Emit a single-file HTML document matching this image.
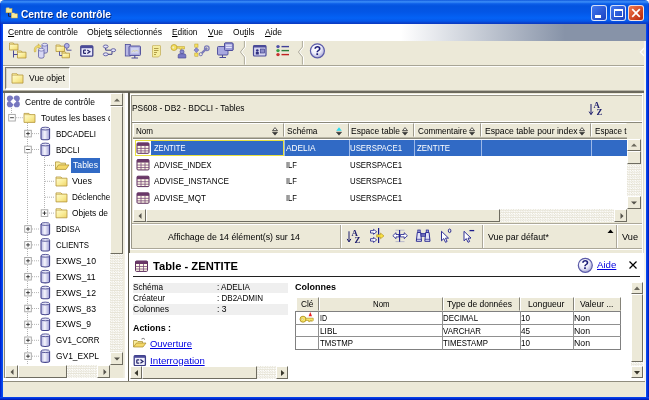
<!DOCTYPE html><html><head><meta charset="utf-8"><title>Centre de contrôle</title><style>html,body{margin:0;padding:0;}
body{width:649px;height:400px;position:relative;overflow:hidden;background:#fff;font-family:"Liberation Sans","DejaVu Sans",sans-serif;font-size:9px;color:#000;}
div,span,a{position:absolute;box-sizing:border-box;white-space:nowrap;}
.t{line-height:12px;height:12px;}
a.t{color:#0000e0;text-decoration:underline;}
.win{will-change:transform;left:0;top:0;width:649px;height:400px;background:#ece9d8;border-radius:4.5px 4.5px 0 0;overflow:hidden;}
.title{left:0;top:0;width:649px;height:24px;background:linear-gradient(#0f57dc 0,#3c8ef8 1.8px,#0c5ee8 3.8px,#0353df 6px,#0356e6 12px,#0462f5 18px,#0558ea 21px,#0a3cc4 23.3px,#0a3cc4 24px);}
.bl{left:0;top:24px;width:3px;height:376px;background:linear-gradient(90deg,#0018c8 0,#0030dc 1px,#0446ee 2px,#0a50f0 3px);}
.br{left:645.8px;top:24px;width:3.2px;height:376px;background:linear-gradient(90deg,#0a50f0 0,#0440e8 1px,#0028d0 2.2px,#0014b0 3.2px);}
.bb{left:0;top:396.8px;width:649px;height:3.2px;background:linear-gradient(#0a4af0 0,#0030d8 1.5px,#0014a8 3.2px);}
.menu{left:3px;top:24px;width:643px;height:17px;background:linear-gradient(90deg,#fff 0,#fff 398px,#8793a8 562px,#8793a8 100%);}
.sb{background:#ece9d8;border:1px solid;border-color:#fff #6e6c60 #6e6c60 #fff;}
.track{background:repeating-conic-gradient(#fdfdfb 0 25%,#e6e3d6 0 50%) 0 0/2.46px 2.46px;}
.hd{background:#ece9d8;border:1px solid;border-color:#fff #9d9a8b #ece9d8 #fff;}
</style></head><body>
<div class="win">
<svg width="0" height="0" style="position:absolute"><defs><linearGradient id="fg" x1="0" y1="0" x2="1" y2="1"><stop offset="0" stop-color="#fffbd0"/><stop offset="0.5" stop-color="#faee9c"/><stop offset="1" stop-color="#f0d468"/></linearGradient><linearGradient id="cg" x1="0" x2="1" y1="0" y2="0"><stop offset="0" stop-color="#b4b4e0"/><stop offset="0.45" stop-color="#f6f6fd"/><stop offset="1" stop-color="#9c9cd4"/></linearGradient><radialGradient id="hg" cx="0.4" cy="0.35" r="0.7"><stop offset="0" stop-color="#ffffff"/><stop offset="0.5" stop-color="#eeeefa"/><stop offset="1" stop-color="#a4a4d4"/></radialGradient></defs></svg>
<div class="title"></div>
<svg style="position:absolute;left:4px;top:5px" width="17" height="15" viewBox="4 5 17 15"><rect x="6" y="8.6" width="6" height="4.2" fill="#f8ea98" stroke="#c8a838" stroke-width="0.5"/><rect x="6.3" y="7.6" width="3" height="1.3" fill="#f8ea98"/><rect x="11.3" y="13.8" width="6.2" height="4.2" fill="#f8ea98" stroke="#c8a838" stroke-width="0.5"/><rect x="11.6" y="12.8" width="3" height="1.3" fill="#f8ea98"/><path d="M8.5 13V16.3H11" stroke="#202040" fill="none" stroke-width="1"/></svg>
<div class="t" style="left:21px;top:7.699999999999999px;transform:scaleX(0.926);transform-origin:0 0;font-size:11px;font-weight:bold;color:#fff;text-shadow:1px 1px 0 #0a2a80;">Centre de contrôle</div>
<div style="left:591.4px;top:5px;width:16px;height:16.2px;border:1px solid rgba(255,255,255,0.82);border-radius:3px;background:linear-gradient(135deg,#4178f0,#1a40c0);"><div style="left:3px;top:9.3px;width:6px;height:2.3px;background:#fff"></div></div>
<div style="left:609.5px;top:5px;width:16px;height:16.2px;border:1px solid rgba(255,255,255,0.82);border-radius:3px;background:linear-gradient(135deg,#4178f0,#1a40c0);"><div style="left:3px;top:2.5px;width:9.2px;height:8.8px;border:1px solid #fff;border-top-width:2.2px"></div></div>
<div style="left:627.8px;top:5px;width:16px;height:16.2px;border:1px solid rgba(255,255,255,0.82);border-radius:3px;background:linear-gradient(135deg,#f0784c,#b82408);"><svg style="position:absolute;left:1px;top:1px" width="12" height="12"><path d="M2.2 2.2L9.8 9.8M9.8 2.2L2.2 9.8" stroke="#fff" stroke-width="1.7"/></svg></div>
<div class="menu"></div>
<div class="t" style="left:8px;top:26px;transform:scaleX(0.945);transform-origin:0 0;"><u>C</u>entre de contrôle</div>
<div class="t" style="left:87px;top:26px;transform:scaleX(0.955);transform-origin:0 0;">Objet<u>s</u> sélectionnés</div>
<div class="t" style="left:172.2px;top:26px;transform:scaleX(0.926);transform-origin:0 0;"><u>E</u>dition</div>
<div class="t" style="left:207.6px;top:26px;transform:scaleX(0.956);transform-origin:0 0;"><u>V</u>ue</div>
<div class="t" style="left:232.6px;top:26px;transform:scaleX(0.934);transform-origin:0 0;">Ou<u>t</u>ils</div>
<div class="t" style="left:264.6px;top:26px;transform:scaleX(0.944);transform-origin:0 0;"><u>A</u>ide</div>
<div style="left:3px;top:64.6px;width:641.5px;height:1px;background:#a8a596"></div>
<div style="left:3px;top:65.6px;width:641.5px;height:1.1px;background:#fdfdfa"></div>
<svg style="position:absolute;left:4px;top:41px" width="641" height="25" viewBox="4 41 641 25"><path d="M9.5 44.2H18.0 V50H9.5Z" fill="url(#fg)" stroke="#b4963a" stroke-width="0.8"/><path d="M9.5 44.2V43H13.325L14.175 44.2" fill="url(#fg)" stroke="#b4963a" stroke-width="0.8"/><path d="M17.5 52.2H26.0 V58H17.5Z" fill="url(#fg)" stroke="#b4963a" stroke-width="0.8"/><path d="M17.5 52.2V51H21.325L22.175 52.2" fill="url(#fg)" stroke="#b4963a" stroke-width="0.8"/><path d="M13.5 50.5V57.5M13.5 54.5H17.5" stroke="#4a4a98" fill="none"/><path d="M42 44.7V51.8A2.75 1.4 0 0 0 47.5 51.8V44.7" fill="#c8c8ec" stroke="#4a4a98" stroke-width="0.7"/><ellipse cx="44.75" cy="44.7" rx="2.75" ry="1.4" fill="#e4e4f6" stroke="#4a4a98" stroke-width="0.56"/><path d="M38.5 49.7V56.8A2.75 1.4 0 0 0 44.0 56.8V49.7" fill="#d8d8f4" stroke="#4a4a98" stroke-width="0.7"/><ellipse cx="41.25" cy="49.7" rx="2.75" ry="1.4" fill="#e4e4f6" stroke="#4a4a98" stroke-width="0.56"/><path d="M34.5 52C33.5 48 35.5 45.5 38.5 45.5L38 43.8L41 46.3L38.3 48.3L38.4 47C36.5 47 35.5 49 36 51.5Z" fill="#f4e070" stroke="#b89a30" stroke-width="0.5"/><path d="M56 46.2H64.5 V51.5H56Z" fill="url(#fg)" stroke="#b4963a" stroke-width="0.8"/><path d="M56 46.2V45H59.825L60.675 46.2" fill="url(#fg)" stroke="#b4963a" stroke-width="0.8"/><path d="M62 53.2H69.5 V57.8H62Z" fill="url(#fg)" stroke="#b4963a" stroke-width="0.8"/><path d="M62 53.2V52H65.375L66.125 53.2" fill="url(#fg)" stroke="#b4963a" stroke-width="0.8"/><circle cx="66.8" cy="45.8" r="2.4" fill="#b0b0e8" stroke="#4a4a98" stroke-width="0.7"/><path d="M66.8 48.2V50.2H71.5M59.5 51.5V55.5H62" stroke="#4a4a98" fill="none" stroke-width="0.9"/><rect x="80.8" y="45.8" width="12" height="10.4" rx="1" fill="#e8e8fa" stroke="#3c3c88" stroke-width="1.3"/><rect x="80.8" y="45.8" width="12" height="2.4" fill="#4a4a98"/><path d="M86 50.2H84.2Q83.6 50.2 83.6 50.8V52.8Q83.6 53.4 84.2 53.4H86M87.3 50L89.9 51.8L87.3 53.6" stroke="#28286c" fill="none" stroke-width="1.25"/><ellipse cx="105.7" cy="46.5" rx="2.4" ry="1.5" fill="#e4e4f8" stroke="#4a4a98" stroke-width="0.8"/><ellipse cx="113.3" cy="50.2" rx="2.4" ry="1.5" fill="#e4e4f8" stroke="#4a4a98" stroke-width="0.8"/><ellipse cx="105.7" cy="54.3" rx="2.4" ry="1.5" fill="#e4e4f8" stroke="#4a4a98" stroke-width="0.8"/><path d="M105.7 48V50.2H110.8M108 54.3H112V51.8" stroke="#303080" fill="none" stroke-width="0.9"/><rect x="125.3" y="44.5" width="5" height="11.5" fill="#b8b8e4" stroke="#4a4a98" stroke-width="0.8"/><rect x="129" y="46" width="11.5" height="9.5" rx="1" fill="#a8a8dc" stroke="#4a4a98" stroke-width="0.9"/><rect x="130.8" y="47.6" width="8" height="6" fill="#d0d4f0"/><path d="M131.5 52L133.5 50.5L135 51.5L136.5 50L138 51.5" stroke="#d8d080" fill="none" stroke-width="0.7"/><path d="M134.8 55.5V57.5M131.5 58H138" stroke="#4a4a98" stroke-width="1.1"/><path d="M152.5 46L153.5 45L154.5 46L155.5 45L156.5 46L157.5 45L158.5 46L159.5 45L160.5 46V55L158.5 57H152.5Z" fill="#f6eea0" stroke="#b8a040" stroke-width="0.6"/><path d="M154 48.5H158.5M154 50.5H158.5M154 52.5H157M154 54.5H156" stroke="#a08830" stroke-width="0.8"/><circle cx="174" cy="47.5" r="3" fill="#f4e060" stroke="#b89a28" stroke-width="0.7"/><circle cx="173.3" cy="47.5" r="0.9" fill="#ece9d8"/><path d="M177 46.5H184.5V49H183V48.2H181.5V49.5H180V48.2H177Z" fill="#f4e060" stroke="#b89a28" stroke-width="0.5"/><circle cx="182" cy="51.8" r="2" fill="#8c8cd0" stroke="#4a4a98" stroke-width="0.7"/><path d="M178.2 58V55.5Q178.2 53.8 180 53.8H184Q185.8 53.8 185.8 55.5V58Z" fill="#7878c4" stroke="#4a4a98" stroke-width="0.7"/><rect x="194.8" y="44" width="3.2" height="3.2" fill="#f4e060" stroke="#b89a28" stroke-width="0.5"/><rect x="194.8" y="53" width="3.2" height="3.2" fill="#f4e060" stroke="#b89a28" stroke-width="0.5"/><path d="M196.4 47.7L198.8 50.1L196.4 52.5L194 50.1Z" fill="#8c8cd8" stroke="#4a4a98" stroke-width="0.5"/><path d="M200.5 54.5L206.5 48.5" stroke="#7c7cb8" stroke-width="2.4" stroke-linecap="round"/><circle cx="206.8" cy="48.2" r="2.3" fill="none" stroke="#7c7cb8" stroke-width="1.3"/><circle cx="200.8" cy="54.2" r="1.6" fill="#ece9d8" stroke="#7c7cb8" stroke-width="1"/><rect x="224.5" y="43" width="8.5" height="7.5" rx="1" fill="#9c9cd8" stroke="#4a4a98" stroke-width="0.9"/><rect x="225.8" y="44.8" width="6" height="2" fill="#e0e0f8"/><rect x="217.5" y="46.5" width="10.5" height="8.5" rx="1" fill="#a8a8e0" stroke="#4a4a98" stroke-width="0.9"/><rect x="224.5" y="43" width="8.5" height="7.5" rx="1" fill="#9c9cd8" stroke="#4a4a98" stroke-width="0.9"/><rect x="225.8" y="44.6" width="6" height="1.2" fill="#e8e8fc"/><rect x="225.8" y="46.8" width="6" height="1.2" fill="#e8e8fc"/><path d="M222.5 55V57M219.5 57.5H226" stroke="#4a4a98" stroke-width="1.1"/><path d="M245.5 41V47L241.5 52L245.5 57V64.6" stroke="#fff" fill="none" stroke-width="1"/><path d="M244.4 41V47L240.4 52L244.4 57V64.6" stroke="#a8a596" fill="none" stroke-width="0.9"/><path d="M303.5 41V47L299.5 52L303.5 57V64.6" stroke="#fff" fill="none" stroke-width="1"/><path d="M302.4 41V47L298.4 52L302.4 57V64.6" stroke="#a8a596" fill="none" stroke-width="0.9"/><path d="M644.3 48L640.3 52L644.3 56" stroke="#fff" fill="none" stroke-width="1.2"/><rect x="253.5" y="45.5" width="12.5" height="10.5" rx="1" fill="#d4d4f0" stroke="#4a4a98" stroke-width="1.2"/><rect x="253.5" y="45.5" width="12.5" height="2" fill="#4a4a98"/><circle cx="257.3" cy="50.5" r="1.3" fill="#303080"/><rect x="255.8" y="52" width="3" height="2.5" fill="#303080"/><rect x="260.5" y="49" width="4" height="4" fill="#8c8cc8" stroke="#303080" stroke-width="0.6"/><circle cx="278" cy="46.6" r="1.7" fill="#5050a8"/><circle cx="278" cy="50.6" r="1.7" fill="#38a048"/><circle cx="278" cy="54.6" r="1.7" fill="#c83030"/><path d="M281.5 46.6H289" stroke="#404098" stroke-width="1.4"/><path d="M281.5 50.6H289" stroke="#2a7a3a" stroke-width="1.4"/><path d="M281.5 54.6H289" stroke="#c02020" stroke-width="1.4"/><circle cx="317.4" cy="50.8" r="7" fill="url(#hg)" stroke="#5a5aa8" stroke-width="1.2"/><text x="317.4" y="54.86" text-anchor="middle" font-family="Liberation Sans,sans-serif" font-weight="bold" font-size="12.25" fill="#1c1c78">?</text></svg>
<div style="left:3px;top:90.3px;width:641.5px;height:1.1px;background:#b8b5a6"></div>
<div style="left:3px;top:91.4px;width:641.5px;height:1.5px;background:#6c6a5e"></div>
<div style="left:4.5px;top:66.8px;width:65px;height:23.2px;border:1px solid;border-color:#7d7b6e #fff #fff #7d7b6e;border-right-width:1.6px;border-bottom-width:2.3px;background:#efede1;box-shadow:inset 1px 1px 0 #d4d1c2;"></div>
<svg style="position:absolute;left:8px;top:70px" width="18" height="18" viewBox="8 70 18 18"><path d="M12 75.0H23 V83.1H12Z" fill="url(#fg)" stroke="#b4963a" stroke-width="0.8"/><path d="M12 75.0V73.8H16.95L18.05 75.0" fill="url(#fg)" stroke="#b4963a" stroke-width="0.8"/></svg>
<div class="t" style="left:28.5px;top:72px;transform:scaleX(0.955);transform-origin:0 0;">Vue objet</div>
<div style="left:3.5px;top:92.7px;width:119.5px;height:287px;border-left:1.2px solid #8a887a;background:#fff;"></div>
<svg style="position:absolute;left:5px;top:93px" width="105" height="272" viewBox="5 93 105 272"><path d="M11.5 108V117.7H23" stroke="#b4b4b4" stroke-width="1" stroke-dasharray="1 1" fill="none"/><path d="M27.5 123V378" stroke="#b4b4b4" stroke-width="1" stroke-dasharray="1 1" fill="none"/><path d="M28 133.6H39" stroke="#b4b4b4" stroke-width="1" stroke-dasharray="1 1" fill="none"/><path d="M28 149.5H39" stroke="#b4b4b4" stroke-width="1" stroke-dasharray="1 1" fill="none"/><path d="M28 229.0H39" stroke="#b4b4b4" stroke-width="1" stroke-dasharray="1 1" fill="none"/><path d="M28 244.9H39" stroke="#b4b4b4" stroke-width="1" stroke-dasharray="1 1" fill="none"/><path d="M28 260.8H39" stroke="#b4b4b4" stroke-width="1" stroke-dasharray="1 1" fill="none"/><path d="M28 276.7H39" stroke="#b4b4b4" stroke-width="1" stroke-dasharray="1 1" fill="none"/><path d="M28 292.6H39" stroke="#b4b4b4" stroke-width="1" stroke-dasharray="1 1" fill="none"/><path d="M28 308.5H39" stroke="#b4b4b4" stroke-width="1" stroke-dasharray="1 1" fill="none"/><path d="M28 324.4H39" stroke="#b4b4b4" stroke-width="1" stroke-dasharray="1 1" fill="none"/><path d="M28 340.3H39" stroke="#b4b4b4" stroke-width="1" stroke-dasharray="1 1" fill="none"/><path d="M28 356.2H39" stroke="#b4b4b4" stroke-width="1" stroke-dasharray="1 1" fill="none"/><path d="M44.5 157V213.1" stroke="#b4b4b4" stroke-width="1" stroke-dasharray="1 1" fill="none"/><path d="M45 165.4H54" stroke="#b4b4b4" stroke-width="1" stroke-dasharray="1 1" fill="none"/><path d="M45 181.3H54" stroke="#b4b4b4" stroke-width="1" stroke-dasharray="1 1" fill="none"/><path d="M45 197.2H54" stroke="#b4b4b4" stroke-width="1" stroke-dasharray="1 1" fill="none"/><path d="M45 213.1H54" stroke="#b4b4b4" stroke-width="1" stroke-dasharray="1 1" fill="none"/><circle cx="10" cy="98.6" r="3.1" fill="#7878c0"/><circle cx="16.7" cy="98.6" r="3.1" fill="#7878c0"/><circle cx="10" cy="104.2" r="3.1" fill="#7878c0"/><circle cx="16.7" cy="104.2" r="3.1" fill="#7878c0"/><path d="M13.35 98.4L16.3 101.4L13.35 104.4L10.4 101.4Z" fill="#fff"/><rect x="8.7" y="114.4" width="6.6" height="6.6" fill="#fff" stroke="#a4a4a4" stroke-width="0.9"/><path d="M10.1 117.7H13.9" stroke="#303030" stroke-width="0.9"/><path d="M24 114.60000000000001H35 V122.4H24Z" fill="url(#fg)" stroke="#b4963a" stroke-width="0.8"/><path d="M24 114.60000000000001V113.4H28.95L30.05 114.60000000000001" fill="url(#fg)" stroke="#b4963a" stroke-width="0.8"/><rect x="24.7" y="130.29999999999998" width="6.6" height="6.6" fill="#fff" stroke="#a4a4a4" stroke-width="0.9"/><path d="M26.1 133.6H29.9" stroke="#303030" stroke-width="0.9"/><path d="M28 131.7V135.5" stroke="#303030" stroke-width="0.9"/><path d="M41 128.6V138.4A4.3 1.4 0 0 0 49.6 138.4V128.6" fill="url(#cg)" stroke="#40408a" stroke-width="1.05"/><ellipse cx="45.3" cy="128.6" rx="4.3" ry="1.4" fill="#e4e4f6" stroke="#40408a" stroke-width="0.84"/><rect x="24.7" y="146.2" width="6.6" height="6.6" fill="#fff" stroke="#a4a4a4" stroke-width="0.9"/><path d="M26.1 149.5H29.9" stroke="#303030" stroke-width="0.9"/><path d="M41 144.5V154.3A4.3 1.4 0 0 0 49.6 154.3V144.5" fill="url(#cg)" stroke="#40408a" stroke-width="1.05"/><ellipse cx="45.3" cy="144.5" rx="4.3" ry="1.4" fill="#e4e4f6" stroke="#40408a" stroke-width="0.84"/><path d="M55.5 169.4V161.9H59.5L60.5 163.1H65.5V164.9" fill="#f8ec9c" stroke="#a88a28" stroke-width="0.7"/><path d="M55.5 169.4L58.5 164.9H69L66 169.4Z" fill="#f4d868" stroke="#a88a28" stroke-width="0.7"/><path d="M56 178.2H67 V186.0H56Z" fill="url(#fg)" stroke="#b4963a" stroke-width="0.8"/><path d="M56 178.2V177.0H60.95L62.05 178.2" fill="url(#fg)" stroke="#b4963a" stroke-width="0.8"/><path d="M56 194.09999999999997H67 V201.89999999999998H56Z" fill="url(#fg)" stroke="#b4963a" stroke-width="0.8"/><path d="M56 194.09999999999997V192.89999999999998H60.95L62.05 194.09999999999997" fill="url(#fg)" stroke="#b4963a" stroke-width="0.8"/><path d="M56 209.99999999999997H67 V217.79999999999998H56Z" fill="url(#fg)" stroke="#b4963a" stroke-width="0.8"/><path d="M56 209.99999999999997V208.79999999999998H60.95L62.05 209.99999999999997" fill="url(#fg)" stroke="#b4963a" stroke-width="0.8"/><rect x="41.2" y="209.79999999999998" width="6.6" height="6.6" fill="#fff" stroke="#a4a4a4" stroke-width="0.9"/><path d="M42.6 213.1H46.4" stroke="#303030" stroke-width="0.9"/><path d="M44.5 211.2V215.0" stroke="#303030" stroke-width="0.9"/><rect x="24.7" y="225.7" width="6.6" height="6.6" fill="#fff" stroke="#a4a4a4" stroke-width="0.9"/><path d="M26.1 229.0H29.9" stroke="#303030" stroke-width="0.9"/><path d="M28 227.1V230.9" stroke="#303030" stroke-width="0.9"/><path d="M41 224.0V233.8A4.3 1.4 0 0 0 49.6 233.8V224.0" fill="url(#cg)" stroke="#40408a" stroke-width="1.05"/><ellipse cx="45.3" cy="224.0" rx="4.3" ry="1.4" fill="#e4e4f6" stroke="#40408a" stroke-width="0.84"/><rect x="24.7" y="241.59999999999997" width="6.6" height="6.6" fill="#fff" stroke="#a4a4a4" stroke-width="0.9"/><path d="M26.1 244.89999999999998H29.9" stroke="#303030" stroke-width="0.9"/><path d="M28 242.99999999999997V246.79999999999998" stroke="#303030" stroke-width="0.9"/><path d="M41 239.89999999999998V249.7A4.3 1.4 0 0 0 49.6 249.7V239.89999999999998" fill="url(#cg)" stroke="#40408a" stroke-width="1.05"/><ellipse cx="45.3" cy="239.89999999999998" rx="4.3" ry="1.4" fill="#e4e4f6" stroke="#40408a" stroke-width="0.84"/><rect x="24.7" y="257.5" width="6.6" height="6.6" fill="#fff" stroke="#a4a4a4" stroke-width="0.9"/><path d="M26.1 260.8H29.9" stroke="#303030" stroke-width="0.9"/><path d="M28 258.90000000000003V262.7" stroke="#303030" stroke-width="0.9"/><path d="M41 255.8V265.6A4.3 1.4 0 0 0 49.6 265.6V255.8" fill="url(#cg)" stroke="#40408a" stroke-width="1.05"/><ellipse cx="45.3" cy="255.8" rx="4.3" ry="1.4" fill="#e4e4f6" stroke="#40408a" stroke-width="0.84"/><rect x="24.7" y="273.4" width="6.6" height="6.6" fill="#fff" stroke="#a4a4a4" stroke-width="0.9"/><path d="M26.1 276.7H29.9" stroke="#303030" stroke-width="0.9"/><path d="M28 274.8V278.59999999999997" stroke="#303030" stroke-width="0.9"/><path d="M41 271.7V281.5A4.3 1.4 0 0 0 49.6 281.5V271.7" fill="url(#cg)" stroke="#40408a" stroke-width="1.05"/><ellipse cx="45.3" cy="271.7" rx="4.3" ry="1.4" fill="#e4e4f6" stroke="#40408a" stroke-width="0.84"/><rect x="24.7" y="289.3" width="6.6" height="6.6" fill="#fff" stroke="#a4a4a4" stroke-width="0.9"/><path d="M26.1 292.6H29.9" stroke="#303030" stroke-width="0.9"/><path d="M28 290.70000000000005V294.5" stroke="#303030" stroke-width="0.9"/><path d="M41 287.6V297.40000000000003A4.3 1.4 0 0 0 49.6 297.40000000000003V287.6" fill="url(#cg)" stroke="#40408a" stroke-width="1.05"/><ellipse cx="45.3" cy="287.6" rx="4.3" ry="1.4" fill="#e4e4f6" stroke="#40408a" stroke-width="0.84"/><rect x="24.7" y="305.2" width="6.6" height="6.6" fill="#fff" stroke="#a4a4a4" stroke-width="0.9"/><path d="M26.1 308.5H29.9" stroke="#303030" stroke-width="0.9"/><path d="M28 306.6V310.4" stroke="#303030" stroke-width="0.9"/><path d="M41 303.5V313.3A4.3 1.4 0 0 0 49.6 313.3V303.5" fill="url(#cg)" stroke="#40408a" stroke-width="1.05"/><ellipse cx="45.3" cy="303.5" rx="4.3" ry="1.4" fill="#e4e4f6" stroke="#40408a" stroke-width="0.84"/><rect x="24.7" y="321.09999999999997" width="6.6" height="6.6" fill="#fff" stroke="#a4a4a4" stroke-width="0.9"/><path d="M26.1 324.4H29.9" stroke="#303030" stroke-width="0.9"/><path d="M28 322.5V326.29999999999995" stroke="#303030" stroke-width="0.9"/><path d="M41 319.4V329.2A4.3 1.4 0 0 0 49.6 329.2V319.4" fill="url(#cg)" stroke="#40408a" stroke-width="1.05"/><ellipse cx="45.3" cy="319.4" rx="4.3" ry="1.4" fill="#e4e4f6" stroke="#40408a" stroke-width="0.84"/><rect x="24.7" y="337.0" width="6.6" height="6.6" fill="#fff" stroke="#a4a4a4" stroke-width="0.9"/><path d="M26.1 340.3H29.9" stroke="#303030" stroke-width="0.9"/><path d="M28 338.40000000000003V342.2" stroke="#303030" stroke-width="0.9"/><path d="M41 335.3V345.1A4.3 1.4 0 0 0 49.6 345.1V335.3" fill="url(#cg)" stroke="#40408a" stroke-width="1.05"/><ellipse cx="45.3" cy="335.3" rx="4.3" ry="1.4" fill="#e4e4f6" stroke="#40408a" stroke-width="0.84"/><rect x="24.7" y="352.9" width="6.6" height="6.6" fill="#fff" stroke="#a4a4a4" stroke-width="0.9"/><path d="M26.1 356.2H29.9" stroke="#303030" stroke-width="0.9"/><path d="M28 354.3V358.09999999999997" stroke="#303030" stroke-width="0.9"/><path d="M41 351.2V361.0A4.3 1.4 0 0 0 49.6 361.0V351.2" fill="url(#cg)" stroke="#40408a" stroke-width="1.05"/><ellipse cx="45.3" cy="351.2" rx="4.3" ry="1.4" fill="#e4e4f6" stroke="#40408a" stroke-width="0.84"/></svg>
<div class="t" style="left:24.5px;top:95.8px;transform:scaleX(0.945);transform-origin:0 0;">Centre de contrôle</div>
<div class="t" style="left:40.5px;top:111.7px;transform:scaleX(0.964);transform-origin:0 0;width:72.1px;overflow:hidden;">Toutes les bases de données</div>
<div class="t" style="left:55.5px;top:127.6px;transform:scaleX(0.889);transform-origin:0 0;">BDCADELI</div>
<div class="t" style="left:55.5px;top:143.5px;transform:scaleX(0.886);transform-origin:0 0;">BDCLI</div>
<div style="left:71px;top:157.9px;width:28.5px;height:15px;background:#316ac5"></div>
<div class="t" style="left:73px;top:159.4px;transform:scaleX(0.961);transform-origin:0 0;color:#fff">Tables</div>
<div class="t" style="left:72px;top:175.3px;transform:scaleX(0.991);transform-origin:0 0;">Vues</div>
<div class="t" style="left:72px;top:191.2px;transform:scaleX(0.901);transform-origin:0 0;width:42.2px;overflow:hidden;">Déclencheurs</div>
<div class="t" style="left:72px;top:207.1px;transform:scaleX(0.934);transform-origin:0 0;">Objets de</div>
<div class="t" style="left:55.5px;top:223.0px;transform:scaleX(0.888);transform-origin:0 0;">BDISA</div>
<div class="t" style="left:55.5px;top:238.89999999999998px;transform:scaleX(0.868);transform-origin:0 0;">CLIENTS</div>
<div class="t" style="left:55.5px;top:254.8px;transform:scaleX(0.963);transform-origin:0 0;">EXWS_10</div>
<div class="t" style="left:55.5px;top:270.7px;transform:scaleX(0.967);transform-origin:0 0;">EXWS_11</div>
<div class="t" style="left:55.5px;top:286.6px;transform:scaleX(0.963);transform-origin:0 0;">EXWS_12</div>
<div class="t" style="left:55.5px;top:302.5px;transform:scaleX(0.963);transform-origin:0 0;">EXWS_83</div>
<div class="t" style="left:55.5px;top:318.4px;transform:scaleX(0.958);transform-origin:0 0;">EXWS_9</div>
<div class="t" style="left:55.5px;top:334.3px;transform:scaleX(0.879);transform-origin:0 0;">GV1_CORR</div>
<div class="t" style="left:55.5px;top:350.2px;transform:scaleX(0.934);transform-origin:0 0;">GV1_EXPL</div>
<div class="track" style="left:110px;top:93px;width:13px;height:272px;"></div>
<div class="sb" style="left:110px;top:93px;width:13px;height:13px;"><svg style="position:absolute;left:3px;top:3.5px" width="6" height="4"><path d="M0 3.5L3 0.5L6 3.5Z" fill="#6a685c"/></svg></div>
<div class="sb" style="left:110px;top:106px;width:13px;height:148px;"></div>
<div class="sb" style="left:110px;top:352px;width:13px;height:13px;"><svg style="position:absolute;left:3px;top:4px" width="6" height="4"><path d="M0 0.5L3 3.5L6 0.5Z" fill="#55534a"/></svg></div>
<div class="track" style="left:5px;top:365px;width:105px;height:13px;"></div>
<div class="sb" style="left:5px;top:365px;width:13px;height:13px;"><svg style="position:absolute;left:3.5px;top:2.5px" width="4" height="6"><path d="M3.5 0L0.5 3L3.5 6Z" fill="#55534a"/></svg></div>
<div class="sb" style="left:18px;top:365px;width:49px;height:13px;"></div>
<div class="sb" style="left:97px;top:365px;width:13px;height:13px;"><svg style="position:absolute;left:4.5px;top:2.5px" width="4" height="6"><path d="M0.5 0L3.5 3L0.5 6Z" fill="#55534a"/></svg></div>
<div style="left:110px;top:365px;width:13px;height:13px;background:#ece9d8"></div>
<div style="left:122.9px;top:92.7px;width:5.3px;height:288.5px;background:linear-gradient(90deg,#eeebdc 0,#f2f0e4 1.6px,#fff 2.2px,#fff 100%)"></div>
<div style="left:128px;top:92.4px;width:1.5px;height:289px;background:#5c5a4e"></div>
<div style="left:641.5px;top:93px;width:1.5px;height:160px;background:#fff"></div>
<div style="left:643px;top:93px;width:1.3px;height:160px;background:#dddbd0"></div>
<div style="left:644.3px;top:41px;width:1.5px;height:356px;background:#f4f3ee"></div>
<div style="left:130px;top:94px;width:512px;height:1px;background:#fff"></div>
<div style="left:130px;top:94px;width:1.1px;height:155.8px;background:#fff"></div>
<div style="left:131.4px;top:95.3px;width:510.5px;height:1px;background:#9a9788"></div>
<div style="left:131.4px;top:95.3px;width:1px;height:153px;background:#9a9788"></div>
<div style="left:131.4px;top:247.6px;width:510.5px;height:1px;background:#aca899"></div>
<div style="left:130px;top:248.7px;width:512px;height:1.1px;background:#fff"></div>
<div style="left:129.4px;top:252.6px;width:514.9px;height:0.9px;background:#8a887a"></div>
<div class="t" style="left:131.6px;top:102px;transform:scaleX(0.931);transform-origin:0 0;">PS608 - DB2 - BDCLI - Tables</div>
<svg style="position:absolute;left:586px;top:98px" width="20" height="20" viewBox="586 98 20 20"><path d="M591 104V114.3M589.1 111.6L591 114.6L592.9 111.6" stroke="#1c1c6c" stroke-width="1" fill="none"/><text x="593.6" y="108.2" font-family="Liberation Serif,serif" font-weight="bold" font-size="8.8" fill="#1c1c6c">A</text><text x="596.6" y="115.3" font-family="Liberation Serif,serif" font-weight="bold" font-size="8.8" fill="#1c1c6c">Z</text></svg>
<div style="left:132.4px;top:120.6px;width:509.5px;height:1px;background:#fff"></div>
<div style="left:132.4px;top:121.6px;width:509.5px;height:1px;background:#8a887a"></div>
<div class="hd" style="left:133px;top:122.6px;width:150.5px;height:14.6px;"></div>
<div class="t" style="left:136px;top:125px;transform:scaleX(0.894);transform-origin:0 0;">Nom</div>
<svg style="position:absolute;left:271.6px;top:126.5px" width="6" height="9"><path d="M0.5 3.6L3 0.6L5.5 3.6Z" fill="#f4f2e8" stroke="#303030" stroke-width="0.8"/><path d="M0.4 5.2L3 8.2L5.6 5.2Z" fill="#383838" stroke="#303030" stroke-width="0.5"/></svg>
<div class="hd" style="left:283.5px;top:122.6px;width:65.0px;height:14.6px;"></div>
<div class="t" style="left:287px;top:125px;transform:scaleX(0.923);transform-origin:0 0;">Schéma</div>
<svg style="position:absolute;left:336px;top:126.5px" width="6" height="9"><path d="M0.2 3.8L3 0.3L5.8 3.8Z" fill="#28dcf0"/><path d="M0.4 5.2L3 8.2L5.6 5.2Z" fill="#383838" stroke="#303030" stroke-width="0.5"/></svg>
<div class="hd" style="left:348.5px;top:122.6px;width:65.80000000000001px;height:14.6px;"></div>
<div class="t" style="left:351px;top:125px;transform:scaleX(0.941);transform-origin:0 0;">Espace table</div>
<svg style="position:absolute;left:402.2px;top:126.5px" width="6" height="9"><path d="M0.5 3.6L3 0.6L5.5 3.6Z" fill="#f4f2e8" stroke="#303030" stroke-width="0.8"/><path d="M0.4 5.2L3 8.2L5.6 5.2Z" fill="#383838" stroke="#303030" stroke-width="0.5"/></svg>
<div class="hd" style="left:414.3px;top:122.6px;width:67.0px;height:14.6px;"></div>
<div class="t" style="left:418.3px;top:125px;transform:scaleX(0.907);transform-origin:0 0;">Commentaire</div>
<svg style="position:absolute;left:468.8px;top:126.5px" width="6" height="9"><path d="M0.5 3.6L3 0.6L5.5 3.6Z" fill="#f4f2e8" stroke="#303030" stroke-width="0.8"/><path d="M0.4 5.2L3 8.2L5.6 5.2Z" fill="#383838" stroke="#303030" stroke-width="0.5"/></svg>
<div class="hd" style="left:481.3px;top:122.6px;width:109.40000000000003px;height:14.6px;"></div>
<div class="t" style="left:484.7px;top:125px;transform:scaleX(0.958);transform-origin:0 0;">Espace table pour index</div>
<svg style="position:absolute;left:579.2px;top:126.5px" width="6" height="9"><path d="M0.5 3.6L3 0.6L5.5 3.6Z" fill="#f4f2e8" stroke="#303030" stroke-width="0.8"/><path d="M0.4 5.2L3 8.2L5.6 5.2Z" fill="#383838" stroke="#303030" stroke-width="0.5"/></svg>
<div class="hd" style="left:590.7px;top:122.6px;width:36.299999999999955px;height:14.6px;border-right-color:#ece9d8"></div>
<div class="t" style="left:594.6px;top:125px;transform:scaleX(0.899);transform-origin:0 0;">Espace t</div>
<div style="left:627px;top:122.6px;width:15px;height:16.4px;background:#ece9d8"></div>
<div style="left:132.5px;top:137.1px;width:494.5px;height:1.2px;background:#bcb9a8"></div>
<div style="left:132.5px;top:138.3px;width:494.5px;height:1.2px;background:#8f8c7e"></div>
<div style="left:133px;top:139px;width:494px;height:70px;background:#fff"></div>
<div style="left:133px;top:140px;width:493.5px;height:15.8px;background:#316ac5"></div>
<div style="left:283.5px;top:140px;width:1px;height:15.8px;background:#9cb8e8"></div>
<div style="left:348.5px;top:140px;width:1px;height:15.8px;background:#9cb8e8"></div>
<div style="left:414.3px;top:140px;width:1px;height:15.8px;background:#9cb8e8"></div>
<div style="left:481.3px;top:140px;width:1px;height:15.8px;background:#9cb8e8"></div>
<div style="left:590.7px;top:140px;width:1px;height:15.8px;background:#9cb8e8"></div>
<div style="left:133px;top:140px;width:18px;height:15.8px;background:#fff"></div>
<div style="left:134.5px;top:140px;width:149.5px;height:15.8px;border:1px solid #e8e040;"></div>
<div class="t" style="left:154px;top:141.9px;transform:scaleX(0.840);transform-origin:0 0;color:#fff">ZENTITE</div>
<div class="t" style="left:286px;top:141.9px;transform:scaleX(0.921);transform-origin:0 0;color:#fff">ADELIA</div>
<div class="t" style="left:349.5px;top:141.9px;transform:scaleX(0.869);transform-origin:0 0;color:#fff">USERSPACE1</div>
<div class="t" style="left:416.5px;top:141.9px;transform:scaleX(0.880);transform-origin:0 0;color:#fff">ZENTITE</div>
<div class="t" style="left:154px;top:158.55px;transform:scaleX(0.877);transform-origin:0 0;">ADVISE_INDEX</div>
<div class="t" style="left:286px;top:158.55px;transform:scaleX(0.845);transform-origin:0 0;">ILF</div>
<div class="t" style="left:349.5px;top:158.55px;transform:scaleX(0.869);transform-origin:0 0;">USERSPACE1</div>
<div class="t" style="left:154px;top:175.2px;transform:scaleX(0.905);transform-origin:0 0;">ADVISE_INSTANCE</div>
<div class="t" style="left:286px;top:175.2px;transform:scaleX(0.845);transform-origin:0 0;">ILF</div>
<div class="t" style="left:349.5px;top:175.2px;transform:scaleX(0.869);transform-origin:0 0;">USERSPACE1</div>
<div class="t" style="left:154px;top:191.85px;transform:scaleX(0.896);transform-origin:0 0;">ADVISE_MQT</div>
<div class="t" style="left:286px;top:191.85px;transform:scaleX(0.845);transform-origin:0 0;">ILF</div>
<div class="t" style="left:349.5px;top:191.85px;transform:scaleX(0.869);transform-origin:0 0;">USERSPACE1</div>
<svg style="position:absolute;left:134px;top:139px" width="18" height="70" viewBox="134 139 18 70"><rect x="137" y="142.9" width="12" height="10.4" rx="1" fill="#fffbe8" stroke="#5a2a5a" stroke-width="1"/><rect x="137" y="142.9" width="12" height="3" fill="#6a3868"/><path d="M137 148.4H149M137 150.9H149M141 145.9V153.3M145 145.9V153.3" stroke="#7a4a7a" stroke-width="0.8"/><rect x="137" y="159.55" width="12" height="10.4" rx="1" fill="#fffbe8" stroke="#5a2a5a" stroke-width="1"/><rect x="137" y="159.55" width="12" height="3" fill="#6a3868"/><path d="M137 165.05H149M137 167.55H149M141 162.55V169.95000000000002M145 162.55V169.95000000000002" stroke="#7a4a7a" stroke-width="0.8"/><rect x="137" y="176.2" width="12" height="10.4" rx="1" fill="#fffbe8" stroke="#5a2a5a" stroke-width="1"/><rect x="137" y="176.2" width="12" height="3" fill="#6a3868"/><path d="M137 181.7H149M137 184.2H149M141 179.2V186.6M145 179.2V186.6" stroke="#7a4a7a" stroke-width="0.8"/><rect x="137" y="192.85" width="12" height="10.4" rx="1" fill="#fffbe8" stroke="#5a2a5a" stroke-width="1"/><rect x="137" y="192.85" width="12" height="3" fill="#6a3868"/><path d="M137 198.35H149M137 200.85H149M141 195.85V203.25M145 195.85V203.25" stroke="#7a4a7a" stroke-width="0.8"/></svg>
<div class="track" style="left:627px;top:138.8px;width:14px;height:70.2px;"></div>
<div class="sb" style="left:627px;top:138.8px;width:14px;height:12.5px;"><svg style="position:absolute;left:3px;top:3.5px" width="6" height="4"><path d="M0 3.5L3 0.5L6 3.5Z" fill="#6a685c"/></svg></div>
<div class="sb" style="left:627px;top:151.3px;width:14px;height:12.5px;"></div>
<div class="sb" style="left:627px;top:196.3px;width:14px;height:12.7px;"><svg style="position:absolute;left:3px;top:4px" width="6" height="4"><path d="M0 0.5L3 3.5L6 0.5Z" fill="#55534a"/></svg></div>
<div class="track" style="left:133px;top:209.3px;width:494px;height:12.9px;"></div>
<div class="sb" style="left:133px;top:209.3px;width:13px;height:12.9px;"><svg style="position:absolute;left:3.5px;top:2.5px" width="4" height="6"><path d="M3.5 0L0.5 3L3.5 6Z" fill="#55534a"/></svg></div>
<div class="sb" style="left:146px;top:209.3px;width:354px;height:12.9px;"></div>
<div class="sb" style="left:614px;top:209.3px;width:13px;height:12.9px;"><svg style="position:absolute;left:4.5px;top:2.5px" width="4" height="6"><path d="M0.5 0L3.5 3L0.5 6Z" fill="#55534a"/></svg></div>
<div style="left:627px;top:209px;width:15px;height:13.2px;background:#ece9d8"></div>
<div style="left:132.4px;top:222.5px;width:509.5px;height:1px;background:#aca899"></div>
<div style="left:132.4px;top:223.5px;width:509.5px;height:1px;background:#fff"></div>
<div class="t" style="left:168px;top:230.6px;transform:scaleX(0.978);transform-origin:0 0;">Affichage de 14 élément(s) sur 14</div>
<div style="left:340px;top:225px;width:1px;height:22.5px;background:#aca899"></div>
<div style="left:341px;top:225px;width:1px;height:22.5px;background:#fff"></div>
<div style="left:481.5px;top:225px;width:1px;height:22.5px;background:#aca899"></div>
<div style="left:482.5px;top:225px;width:1px;height:22.5px;background:#fff"></div>
<div style="left:616px;top:225px;width:1px;height:22.5px;background:#aca899"></div>
<div style="left:617px;top:225px;width:1px;height:22.5px;background:#fff"></div>
<svg style="position:absolute;left:342px;top:226px" width="275" height="22" viewBox="342 226 275 22"><path d="M349 231.3V241.60000000000002M347.1 238.9L349 241.9L350.9 238.9" stroke="#1c1c6c" stroke-width="1" fill="none"/><text x="351.6" y="235.5" font-family="Liberation Serif,serif" font-weight="bold" font-size="8.8" fill="#1c1c6c">A</text><text x="354.6" y="242.60000000000002" font-family="Liberation Serif,serif" font-weight="bold" font-size="8.8" fill="#1c1c6c">Z</text><path d="M378.6 228V243" stroke="#1c1c8c" stroke-width="1.2"/><path d="M370.5 230.6H373.5V229.3L376.7 231.8L373.5 234.3V233H370.5Z" fill="#fff" stroke="#1c1c8c" stroke-width="0.8"/><path d="M370.5 238.7H373.5V237.4L376.7 239.9L373.5 242.4V241.1H370.5Z" fill="#fff" stroke="#1c1c8c" stroke-width="0.8"/><path d="M376.7 234.7H380.5V233L384 235.9L380.5 238.8V237.1H376.7Z" fill="#f8e040" stroke="#b09020" stroke-width="0.6"/><path d="M395.5 230.2H404.5M395.5 241.6H404.5" stroke="#b4b4c8" stroke-width="0.9"/><path d="M399.6 230V241.8" stroke="#1c1c8c" stroke-width="1.1"/><path d="M392.8 235.7L396 232.7V234.5H399V236.9H396V238.7Z M407.4 235.7L404.2 232.7V234.5H400.4V236.9H404.2V238.7Z" fill="#fff" stroke="#1c1c8c" stroke-width="0.8"/><path d="M417.3 232.5H420.7L421.5 241.3H416.3Z M425.7 232.5H429.1L430 241.3H424.8Z" fill="#e4e4f8" stroke="#1c1c8c" stroke-width="0.9"/><rect x="417.8" y="230" width="2.4" height="2.5" fill="#9c9cd8" stroke="#1c1c8c" stroke-width="0.7"/><rect x="426.2" y="230" width="2.4" height="2.5" fill="#9c9cd8" stroke="#1c1c8c" stroke-width="0.7"/><rect x="421" y="233.3" width="4.4" height="3" fill="#6a6ab8" stroke="#1c1c8c" stroke-width="0.6"/><path d="M416.5 239.3H421.3M425 239.3H429.8" stroke="#1c1c8c" stroke-width="0.7"/><path d="M441.5 231.3V240.8L443.8 238.60000000000002L445.5 242.3L447.1 241.5L445.5 238.10000000000002H448.5Z" fill="#fff" stroke="#1c1c8c" stroke-width="0.9"/><ellipse cx="449.6" cy="230.8" rx="1.3" ry="1.8" fill="none" stroke="#1c1c8c" stroke-width="0.9"/><path d="M464 231.3V240.8L466.3 238.60000000000002L468 242.3L469.6 241.5L468 238.10000000000002H471Z" fill="#fff" stroke="#1c1c8c" stroke-width="0.9"/><path d="M469.5 230.6H474.2" stroke="#1c1c8c" stroke-width="1.3"/><path d="M607.5 233L610.5 229.5L613.5 233Z" fill="#000"/></svg>
<div class="t" style="left:488px;top:230.6px;transform:scaleX(0.980);transform-origin:0 0;">Vue par défaut*</div>
<div class="t" style="left:622px;top:230.6px;transform:scaleX(1.020);transform-origin:0 0;">Vue</div>
<div style="left:129.4px;top:253.4px;width:514.9px;height:126px;background:#fff"></div>
<svg style="position:absolute;left:133px;top:258px" width="18" height="16" viewBox="133 258 18 16"><rect x="135.5" y="261" width="12" height="10.4" rx="1" fill="#fffbe8" stroke="#5a2a5a" stroke-width="1"/><rect x="135.5" y="261" width="12" height="3" fill="#6a3868"/><path d="M135.5 266.5H147.5M135.5 269H147.5M139.5 264V271.4M143.5 264V271.4" stroke="#7a4a7a" stroke-width="0.8"/></svg>
<div class="t" style="left:152.5px;top:259.5px;transform:scaleX(1.018);transform-origin:0 0;font-size:11px;font-weight:bold;line-height:14px;height:14px;margin-top:-1px">Table - ZENTITE</div>
<div style="left:133px;top:275.5px;width:507px;height:1px;background:#202020"></div>
<svg style="position:absolute;left:575px;top:256px" width="20" height="20" viewBox="575 256 20 20"><circle cx="585.3" cy="265.3" r="7" fill="url(#hg)" stroke="#5a5aa8" stroke-width="1.2"/><text x="585.3" y="269.36" text-anchor="middle" font-family="Liberation Sans,sans-serif" font-weight="bold" font-size="12.25" fill="#1c1c78">?</text></svg>
<a class="t" style="left:596.7px;top:259px;transform:scaleX(1.016);transform-origin:0 0;font-size:9.5px">Aide</a>
<svg style="position:absolute;left:627px;top:259px" width="12" height="12" viewBox="627 259 12 12"><path d="M629.5 261.5L636.5 268.5M636.5 261.5L629.5 268.5" stroke="#000" stroke-width="1.2"/></svg>
<div style="left:133px;top:282.5px;width:155px;height:10px;background:#efefef"></div>
<div style="left:133px;top:304px;width:155px;height:10.5px;background:#efefef"></div>
<div class="t" style="left:133px;top:281.0px;transform:scaleX(0.908);transform-origin:0 0;">Schéma</div>
<div class="t" style="left:217px;top:281.0px;transform:scaleX(0.903);transform-origin:0 0;">: ADELIA</div>
<div class="t" style="left:133px;top:292.2px;transform:scaleX(0.914);transform-origin:0 0;">Créateur</div>
<div class="t" style="left:217px;top:292.2px;transform:scaleX(0.893);transform-origin:0 0;">: DB2ADMIN</div>
<div class="t" style="left:133px;top:303.4px;transform:scaleX(0.947);transform-origin:0 0;">Colonnes</div>
<div class="t" style="left:217px;top:303.4px;transform:scaleX(0.949);transform-origin:0 0;">: 3</div>
<div class="t" style="left:133px;top:321.5px;transform:scaleX(0.935);transform-origin:0 0;font-size:9.5px;font-weight:bold;">Actions :</div>
<a class="t" style="left:149.5px;top:337.7px;transform:scaleX(0.994);transform-origin:0 0;font-size:9.5px;">Ouverture</a>
<a class="t" style="left:149.5px;top:354.5px;transform:scaleX(1.031);transform-origin:0 0;font-size:9.5px;height:11.5px;overflow:hidden">Interrogation</a>
<svg style="position:absolute;left:132px;top:336px" width="16" height="30" viewBox="132 336 16 30"><path d="M133.5 347.0V340.5H137L138 341.5H142.5V343.0" fill="#f8ec9c" stroke="#a88a28" stroke-width="0.7"/><path d="M133.5 347.0L136.5 343.0H146L143 347.0Z" fill="#f4d868" stroke="#a88a28" stroke-width="0.7"/><path d="M141.5 339.0Q143.5 337.5 145 339.5" stroke="#404040" fill="none" stroke-width="0.7"/><rect x="134.2" y="355.6" width="11.2" height="10" rx="1" fill="#f0f0fc" stroke="#3c3c88" stroke-width="1.3"/><rect x="134.2" y="355.6" width="11.2" height="2.2" fill="#4a4a98"/><path d="M139.2 359.8H137.4Q136.8 359.8 136.8 360.4V362.4Q136.8 363 137.4 363H139.2M140.4 359.6L143 361.4L140.4 363.2" stroke="#28286c" fill="none" stroke-width="1.25"/></svg>
<div class="t" style="left:294.5px;top:281px;transform:scaleX(0.947);transform-origin:0 0;font-size:9.5px;font-weight:bold;">Colonnes</div>
<div style="left:295px;top:311px;width:325.5px;height:39px;background:#fff;border:1px solid #808080;"></div>
<div style="left:295.5px;top:296.8px;width:23px;height:14.4px;background:#ece9d8;border:1px solid;border-color:#fff #858378 #ece9d8 #fff;"></div>
<div class="t" style="left:300.5px;top:298px;transform:scaleX(0.925);transform-origin:0 0;">Clé</div>
<div style="left:318.5px;top:296.8px;width:124px;height:14.4px;background:#ece9d8;border:1px solid;border-color:#fff #858378 #ece9d8 #fff;"></div>
<div class="t" style="left:372.5px;top:298px;transform:scaleX(0.868);transform-origin:0 0;">Nom</div>
<div style="left:442.5px;top:296.8px;width:77.5px;height:14.4px;background:#ece9d8;border:1px solid;border-color:#fff #858378 #ece9d8 #fff;"></div>
<div class="t" style="left:447px;top:298px;transform:scaleX(0.941);transform-origin:0 0;">Type de données</div>
<div style="left:520.0px;top:296.8px;width:53.5px;height:14.4px;background:#ece9d8;border:1px solid;border-color:#fff #858378 #ece9d8 #fff;"></div>
<div class="t" style="left:528px;top:298px;transform:scaleX(0.959);transform-origin:0 0;">Longueur</div>
<div style="left:573.5px;top:296.8px;width:47px;height:14.4px;background:#ece9d8;border:1px solid;border-color:#fff #858378 #ece9d8 #fff;"></div>
<div class="t" style="left:580px;top:298px;transform:scaleX(0.947);transform-origin:0 0;">Valeur ...</div>
<div style="left:295px;top:323.7px;width:325.5px;height:1px;background:#909090"></div>
<div style="left:295px;top:336.3px;width:325.5px;height:1px;background:#909090"></div>
<div style="left:318px;top:311px;width:1px;height:39px;background:#909090"></div>
<div style="left:442px;top:311px;width:1px;height:39px;background:#909090"></div>
<div style="left:519.5px;top:311px;width:1px;height:39px;background:#909090"></div>
<div style="left:573px;top:311px;width:1px;height:39px;background:#909090"></div>
<div class="t" style="left:320px;top:311.9px;transform:scaleX(0.778);transform-origin:0 0;">ID</div>
<div class="t" style="left:443px;top:311.9px;transform:scaleX(0.875);transform-origin:0 0;">DECIMAL</div>
<div class="t" style="left:521px;top:311.9px;transform:scaleX(0.899);transform-origin:0 0;">10</div>
<div class="t" style="left:573.7px;top:311.9px;transform:scaleX(0.969);transform-origin:0 0;">Non</div>
<div class="t" style="left:320px;top:324.54999999999995px;transform:scaleX(0.918);transform-origin:0 0;">LIBL</div>
<div class="t" style="left:443px;top:324.54999999999995px;transform:scaleX(0.877);transform-origin:0 0;">VARCHAR</div>
<div class="t" style="left:521px;top:324.54999999999995px;transform:scaleX(0.899);transform-origin:0 0;">45</div>
<div class="t" style="left:573.7px;top:324.54999999999995px;transform:scaleX(0.969);transform-origin:0 0;">Non</div>
<div class="t" style="left:320px;top:337.2px;transform:scaleX(0.868);transform-origin:0 0;">TMSTMP</div>
<div class="t" style="left:443px;top:337.2px;transform:scaleX(0.868);transform-origin:0 0;">TIMESTAMP</div>
<div class="t" style="left:521px;top:337.2px;transform:scaleX(0.899);transform-origin:0 0;">10</div>
<div class="t" style="left:573.7px;top:337.2px;transform:scaleX(0.969);transform-origin:0 0;">Non</div>
<svg style="position:absolute;left:298px;top:311px" width="20" height="13" viewBox="298 311 20 13"><circle cx="303" cy="319.2" r="3" fill="#f8e868" stroke="#b09020" stroke-width="0.9"/><circle cx="302.2" cy="319.2" r="0.9" fill="#fff" stroke="#b09020" stroke-width="0.4"/><path d="M305.8 318.2H313.2V320.4L312.4 321.2H311.4V320.4H310.2V321.6H308.6V320.4H305.8Z" fill="#f8e868" stroke="#b09020" stroke-width="0.7"/><path d="M308.6 316.2L310.3 312L312 316.2Z" fill="#e82020"/></svg>
<div class="track" style="left:631px;top:281.5px;width:12.4px;height:96.5px;"></div>
<div class="sb" style="left:631px;top:281.5px;width:12.4px;height:12.5px;"><svg style="position:absolute;left:2px;top:3px" width="6" height="4"><path d="M0 4L3 0.5L6 4Z" fill="#6a685c"/></svg></div>
<div class="sb" style="left:631px;top:294px;width:12.4px;height:68.3px;"></div>
<div class="sb" style="left:631px;top:366.2px;width:12.4px;height:12.3px;"><svg style="position:absolute;left:2px;top:3.5px" width="6" height="4"><path d="M0 0L3 3.5L6 0Z" fill="#3a382c"/></svg></div>
<div class="track" style="left:130px;top:366px;width:158px;height:12.5px;"></div>
<div class="sb" style="left:130px;top:366px;width:12px;height:12.5px;"><svg style="position:absolute;left:3px;top:2.5px" width="4" height="6"><path d="M4 0L0.5 3L4 6Z" fill="#3a382c"/></svg></div>
<div class="sb" style="left:142px;top:366px;width:115px;height:12.5px;"></div>
<div class="sb" style="left:276px;top:366px;width:12px;height:12.5px;"><svg style="position:absolute;left:4px;top:2.5px" width="4" height="6"><path d="M0 0L3.5 3L0 6Z" fill="#3a382c"/></svg></div>
<div style="left:3px;top:378px;width:125.2px;height:2.5px;background:#fff"></div>
<div style="left:129.4px;top:378.5px;width:514.9px;height:2.2px;background:#fff"></div>
<div style="left:3px;top:380.8px;width:642px;height:1px;background:#8f8c7e"></div>
<div style="left:3px;top:382px;width:642px;height:15px;background:#ece9d8"></div>
<div style="left:0px;top:3px;width:1.3px;height:21px;background:linear-gradient(90deg,#0a2cc4,rgba(10,60,210,0))"></div>
<div style="left:647.7px;top:3px;width:1.3px;height:21px;background:linear-gradient(270deg,#0a2cc4,rgba(10,60,210,0))"></div>
<div class="bl"></div><div class="br"></div><div class="bb"></div>
</div>
</body></html>
